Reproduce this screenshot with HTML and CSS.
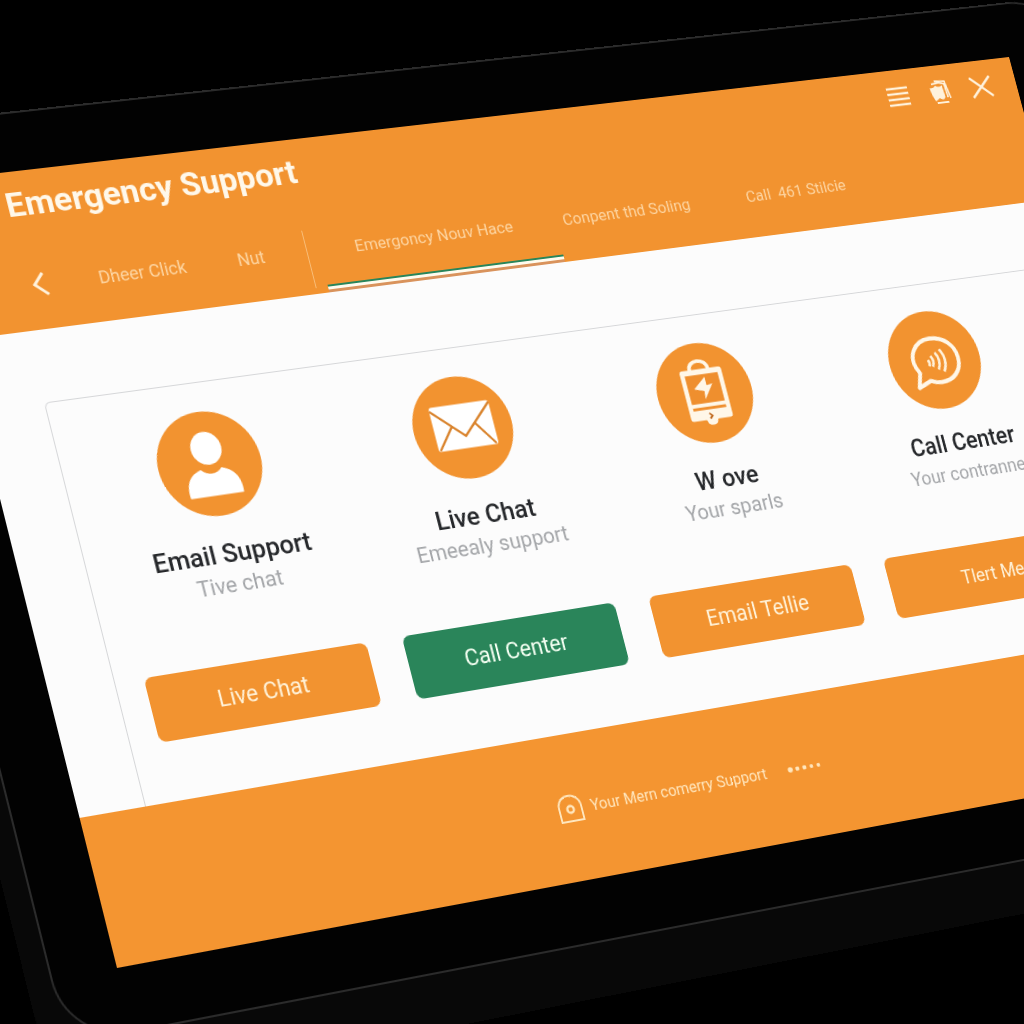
FILE: index.html
```html
<!DOCTYPE html>
<html lang="en">
<head>
<meta charset="utf-8">
<meta name="viewport" content="width=device-width, initial-scale=1">
<title>Emergency Support</title>
<link rel="stylesheet" href="styles.css">
</head>
<body>
<div class="stage">
  <div class="device">
    <div class="screen">
      <header class="header">
        <div class="titlebar">
          <h1 class="title">Emergency Support</h1>
          <div class="tools">
            <button class="icon-button" type="button" aria-label="Menu">
              <svg viewBox="0 0 28 28" width="28" height="28"><path d="M2 5H27M2 11H27M2 17H27M2 23H27" stroke="currentColor" stroke-width="2.6"/></svg>
            </button>
            <button class="icon-button" type="button" aria-label="Documents">
              <svg viewBox="0 0 28 28" width="28" height="28"><path d="M3 9Q7 10 10 7Q15 10 18 7L19 20Q17 25 12 21L7 24Q4 19 3 9Z" fill="currentColor"/><path d="M6 5L14 4L21 6L22 21M10 2L22 3L25 22M8 26H22" fill="none" stroke="currentColor" stroke-width="1.8"/></svg>
            </button>
            <button class="icon-button" type="button" aria-label="Close">
              <svg viewBox="0 0 28 28" width="28" height="28"><path d="M2 3L26 25M26 3L2 25" stroke="currentColor" stroke-width="2.6"/></svg>
            </button>
          </div>
        </div>
        <nav class="nav">
          <button class="back" type="button" aria-label="Back">
            <svg viewBox="0 0 16 26" width="16" height="26"><path d="M12 2L2 13L14 24" fill="none" stroke="currentColor" stroke-width="3"/></svg>
          </button>
          <a class="link link-first" href="#click">Dheer Click</a>
          <a class="link link-second" href="#nut">Nut</a>
          <a class="link link-active" href="#now">Emergoncy Nouv Hace</a>
          <a class="link link-wide" href="#soling">Conpent thd Soling</a>
          <a class="link" href="#call">Call &nbsp;461 Stilcie</a>
        </nav>
      </header>

      <main class="main">
        <div class="panel">
          <section class="option">
            <svg class="badge" viewBox="0 0 108 108"><circle cx="54" cy="54" r="54" fill="#f29330"/><ellipse cx="54" cy="38" rx="16" ry="17" fill="#fff"/><path d="M26 87C24 71 32 62 43 59C49 66 59 66 65 59C76 62 84 71 82 87Z" fill="#fff"/></svg>
            <h2 class="name">Email Support</h2>
            <p class="note">Tive chat</p>
            <button class="action" type="button">Live Chat</button>
          </section>
          <section class="option">
            <svg class="badge" viewBox="0 0 108 108"><circle cx="54" cy="54" r="54" fill="#f29330"/><rect x="22" y="29" width="66" height="47" rx="3" fill="#fff"/><path d="M22 33L55 63L88 31M24 75L42 52M86 75L68 51" fill="none" stroke="#d9832c" stroke-width="2.4"/></svg>
            <h2 class="name">Live Chat</h2>
            <p class="note">Emeealy support</p>
            <button class="action action-green" type="button">Call Center</button>
          </section>
          <section class="option">
            <svg class="badge" viewBox="0 0 108 108"><circle cx="54" cy="54" r="54" fill="#f29330"/><path d="M43 29C42 16 65 16 64 29" fill="none" stroke="#fff7e8" stroke-width="4"/><rect x="31" y="28" width="48" height="55" rx="3" fill="#fff7e8"/><path d="M48 82H62L60 87Q55 91 50 87Z" fill="#fff7e8"/><path d="M36 34H74V65H36ZM36 69H74V72H36Z" fill="#ef8f2e"/><path d="M43 49L58 37L58 46L65 45L53 61L54 52Z" fill="#fff7e8"/><path d="M53 76L56 79L53 82" fill="none" stroke="#c06a20" stroke-width="2"/></svg>
            <h2 class="name">W ove</h2>
            <p class="note">Your sparls</p>
            <button class="action" type="button">Email Tellie</button>
          </section>
          <section class="option option-last">
            <svg class="badge" viewBox="0 0 108 108"><circle cx="54" cy="54" r="54" fill="#f29330"/><path d="M33 66C21 46 37 30 54 30C71 30 82 41 82 55C82 70 70 79 56 79C51 79 47 78 43 76L28 82Z" fill="none" stroke="#fff7e8" stroke-width="4.5" stroke-linejoin="round"/><path d="M50 49Q54 55 50 61M56 46Q62 55 56 65M62 43Q70 55 62 68M46 53Q48 57 46 60" fill="none" stroke="#fff0d8" stroke-width="3"/></svg>
            <h2 class="name">Call Center</h2>
            <p class="note">Your contrannel</p>
            <button class="action" type="button">Tlert Mee</button>
          </section>
        </div>
      </main>

      <footer class="footer">
        <svg class="pin" viewBox="0 0 28 30" width="28" height="30"><path d="M2 28V14C2 6 8 2 14 2C20 2 26 6 26 14V28Z" fill="none" stroke="currentColor" stroke-width="2"/><circle cx="14" cy="16" r="3.5" fill="none" stroke="currentColor" stroke-width="2.4"/></svg>
        <span>Your Mern comerry Support</span>
        <svg class="dots" viewBox="0 0 40 8" width="40" height="8" fill="currentColor"><circle cx="3" cy="4" r="2.8"/><circle cx="11" cy="4" r="2.3"/><circle cx="19" cy="4" r="2.3"/><circle cx="27" cy="4" r="2"/><circle cx="35" cy="4" r="2"/></svg>
      </footer>
    </div>
  </div>
</div>
</body>
</html>
```
FILE: styles.css
```css
* {
  box-sizing: border-box;
}

body {
  margin: 0;
  background: #000;
  font-family: Roboto, "Liberation Sans", sans-serif;
}

h1, h2, p {
  margin: 0;
}

button {
  padding: 0;
  border: 0;
  background: none;
  color: inherit;
  font: inherit;
}

.stage {
  height: 100vh;
  overflow: hidden;
}

/* The tablet lies at an angle; the whole device shares one perspective. */
.device {
  width: calc(100vw + 320px);
  margin: -60px 0 0 -66px;
  padding: 58px 64px 62px;
  border: 2px solid #2b2b2b;
  border-radius: 64px;
  background: #020202;
  box-shadow: 0 30px 0 24px #080808;
  transform-origin: 66px 60px;
  transform: matrix3d(0.99513, -0.09917, 0, 0.000087675, 0.24697, 0.98282, 0, -0.000015127, 0, 0, 1, 0, -79, 182, 0, 1);
}

.screen {
  display: flex;
  flex-direction: column;
  width: calc(100vw + 176px);
  min-height: calc(100vh - 236px);
  background: #fcfcfc;
}

.header {
  display: flex;
  flex-direction: column;
  justify-content: space-between;
  height: 160px;
  background: #f29330;
  color: #fff2dc;
}

.titlebar {
  display: flex;
  justify-content: space-between;
  padding: 10px 28px 0 77px;
}

.title {
  color: #fff8ea;
  font-size: 34px;
  font-weight: 700;
  line-height: 46px;
}

.tools {
  display: flex;
  gap: 22px;
  padding-top: 5px;
}

.icon-button {
  width: 28px;
  height: 28px;
}

.icon-button svg,
.back svg {
  display: block;
}

.nav {
  display: flex;
  align-items: stretch;
  height: 66px;
  padding-left: 84px;
  font-size: 17px;
  line-height: 24px;
}

.back {
  align-self: flex-start;
  margin: 8px 51px 0 0;
}

.link {
  padding-top: 10px;
  color: #fdd5a2;
  text-decoration: none;
}

.link-first {
  width: 144px;
  font-size: 18px;
}

.link-second {
  width: 74px;
  height: 60px;
  border-right: 1px solid #f8bd78;
  font-size: 18px;
}

.link-active {
  width: 257px;
  height: 66px;
  margin: 0 9px 0 12px;
  padding-right: 8px;
  border-bottom: 3px solid #d9935c;
  background: linear-gradient(#28855a 2px, #fffbee 2px) bottom / 100% 5px no-repeat;
  text-align: center;
}

.link-wide {
  width: 208px;
}

.main {
  padding: 72px 36px 0 66px;
}

.panel {
  display: grid;
  grid-template-columns: repeat(4, 1fr);
  column-gap: 38px;
  padding: 29px 30px 59px 29px;
  border: 1px solid #d6d7d9;
  border-bottom: 0;
  border-radius: 6px 6px 0 0;
}

.option {
  display: flex;
  flex-direction: column;
  align-items: center;
}

.badge {
  width: 106px;
  height: 106px;
  margin: 0 0 22px 8px;
}

.name,
.note {
  padding-left: 8px;
  line-height: 32px;
  white-space: nowrap;
}

.name {
  color: #26282b;
  font-size: 26px;
  font-weight: 500;
}

.note {
  margin-bottom: 61px;
  color: #a4a6a9;
  font-size: 22px;
}

.action {
  width: 100%;
  height: 65px;
  border-radius: 8px;
  background: #f29330;
  color: #fff2d8;
  font-size: 23px;
}

.action-green {
  background: #2a855a;
  color: #f4fff2;
}

.option-last .badge {
  margin-left: 4px;
}

.option-last .name,
.option-last .note,
.option-last .action {
  padding-left: 20px;
}

.option-last .name {
  font-size: 25px;
}

.option-last .note,
.option-last .action {
  font-size: 20px;
}

.footer {
  display: flex;
  flex: 1;
  align-items: flex-start;
  gap: 8px;
  padding: 60px 0 57px 480px;
  background: #f49531;
  color: #ffe6bd;
  font-size: 16px;
  line-height: 32px;
}

.dots {
  margin: 12px 0 0 16px;
}
```
